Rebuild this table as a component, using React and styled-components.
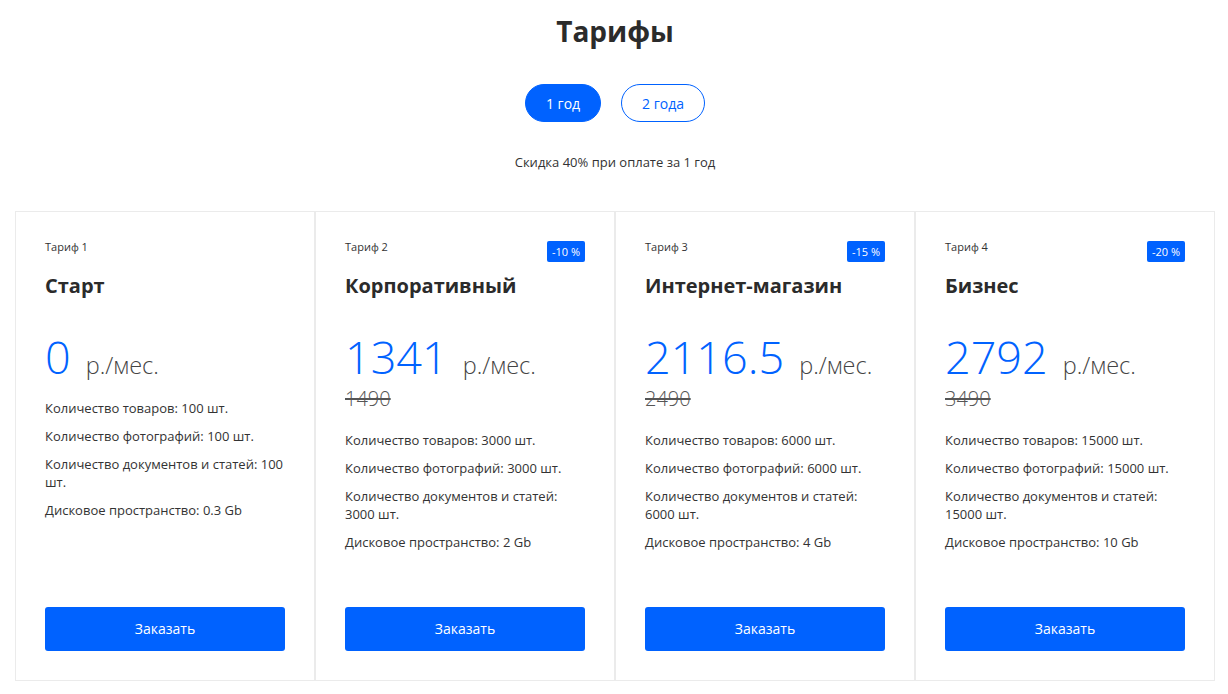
import React, { useState } from 'react';
import styled, { createGlobalStyle } from 'styled-components';

const GlobalStyle = createGlobalStyle`
  body {
    margin: 0;
    background: #fff;
    font-family: "Open Sans", "Liberation Sans", sans-serif;
    color: #333;
  }
`;

const BLUE = '#0062ff';

const plans = [
  { label: 'Тариф 1', name: 'Старт', price: '0', items: ['100 шт.', '100 шт.', '100 шт.', '0.3 Gb'] },
  { label: 'Тариф 2', name: 'Корпоративный', price: '1341', old: '1490', badge: '-10 %', items: ['3000 шт.', '3000 шт.', '3000 шт.', '2 Gb'] },
  { label: 'Тариф 3', name: 'Интернет-магазин', price: '2116.5', old: '2490', badge: '-15 %', items: ['6000 шт.', '6000 шт.', '6000 шт.', '4 Gb'] },
  { label: 'Тариф 4', name: 'Бизнес', price: '2792', old: '3490', badge: '-20 %', items: ['15000 шт.', '15000 шт.', '15000 шт.', '10 Gb'] },
];

const featureNames = [
  'Количество товаров',
  'Количество фотографий',
  'Количество документов и статей',
  'Дисковое пространство',
];

const Page = styled.div`
  width: 1200px;
  margin-left: 15px;
  padding-top: 13px;
`;

const Title = styled.h1`
  margin: 0;
  text-align: center;
  font-size: 28px;
  font-weight: 700;
  line-height: 36px;
  color: #2b2b2b;
`;

const Toggle = styled.div`
  display: flex;
  justify-content: center;
  gap: 20px;
  margin-top: 35px;
`;

const PeriodButton = styled.button`
  height: 38px;
  padding: 0 20px;
  border-radius: 19px;
  border: 1px solid ${BLUE};
  background: ${(p) => (p.$active ? BLUE : '#fff')};
  color: ${(p) => (p.$active ? '#fff' : BLUE)};
  font-family: inherit;
  font-size: 14px;
  cursor: pointer;
`;

const Note = styled.p`
  margin: 31px 0 0;
  text-align: center;
  font-size: 13px;
  line-height: 18px;
  color: #333;
`;

const Grid = styled.div`
  display: grid;
  grid-template-columns: repeat(4, 300px);
  margin-top: 40px;
`;

const Card = styled.div`
  display: flex;
  flex-direction: column;
  height: 470px;
  box-sizing: border-box;
  border: 1px solid #ebebeb;
  padding: 27px 29px 29px;
`;

const CardHead = styled.div`
  display: flex;
  justify-content: space-between;
  align-items: flex-start;
  height: 22px;
`;

const Label = styled.span`
  font-size: 11px;
  line-height: 15px;
  color: #333;
`;

const Badge = styled.span`
  margin-top: 2px;
  height: 21px;
  padding: 0 5px;
  border-radius: 2px;
  background: ${BLUE};
  color: #fff;
  font-size: 11px;
  line-height: 21px;
`;

const Name = styled.h2`
  margin: 11px 0 0;
  font-size: 20px;
  font-weight: 700;
  line-height: 28px;
  color: #2b2b2b;
`;

const PriceRow = styled.div`
  display: flex;
  align-items: baseline;
  gap: 15px;
  margin-top: 27px;
`;

const Amount = styled.span`
  font-size: 45px;
  font-weight: 300;
  line-height: 60px;
  color: ${BLUE};
`;

const Unit = styled.span`
  font-size: 23.5px;
  font-weight: 300;
  color: #444;
`;

const OldPrice = styled.s`
  display: block;
  font-size: 20px;
  font-weight: 300;
  line-height: 24px;
  color: #555;
`;

const Features = styled.ul`
  list-style: none;
  margin: ${(p) => (p.$withOld ? '20px' : '12px')} 0 0;
  padding: 0;
`;

const Feature = styled.li`
  font-size: 13px;
  line-height: 18px;
  margin-bottom: 10px;
  color: #333;
`;

const Order = styled.button`
  margin-top: auto;
  width: 240px;
  height: 44px;
  padding: 0 0 2px;
  border: none;
  border-radius: 3px;
  background: ${BLUE};
  color: #fff;
  font-family: inherit;
  font-size: 14px;
  cursor: pointer;
`;

export default function App() {
  const [period, setPeriod] = useState(1);

  return (
    <Page>
      <GlobalStyle />
      <Title>Тарифы</Title>
      <Toggle>
        <PeriodButton $active={period === 1} onClick={() => setPeriod(1)}>1 год</PeriodButton>
        <PeriodButton $active={period === 2} onClick={() => setPeriod(2)}>2 года</PeriodButton>
      </Toggle>
      <Note>Скидка 40% при оплате за 1 год</Note>
      <Grid>
        {plans.map((plan) => (
          <Card key={plan.label}>
            <CardHead>
              <Label>{plan.label}</Label>
              {plan.badge && <Badge>{plan.badge}</Badge>}
            </CardHead>
            <Name>{plan.name}</Name>
            <PriceRow>
              <Amount>{plan.price}</Amount>
              <Unit>р./мес.</Unit>
            </PriceRow>
            {plan.old && <OldPrice>{plan.old}</OldPrice>}
            <Features $withOld={!!plan.old}>
              {plan.items.map((value, i) => (
                <Feature key={featureNames[i]}>{featureNames[i]}: {value}</Feature>
              ))}
            </Features>
            <Order>Заказать</Order>
          </Card>
        ))}
      </Grid>
    </Page>
  );
}
